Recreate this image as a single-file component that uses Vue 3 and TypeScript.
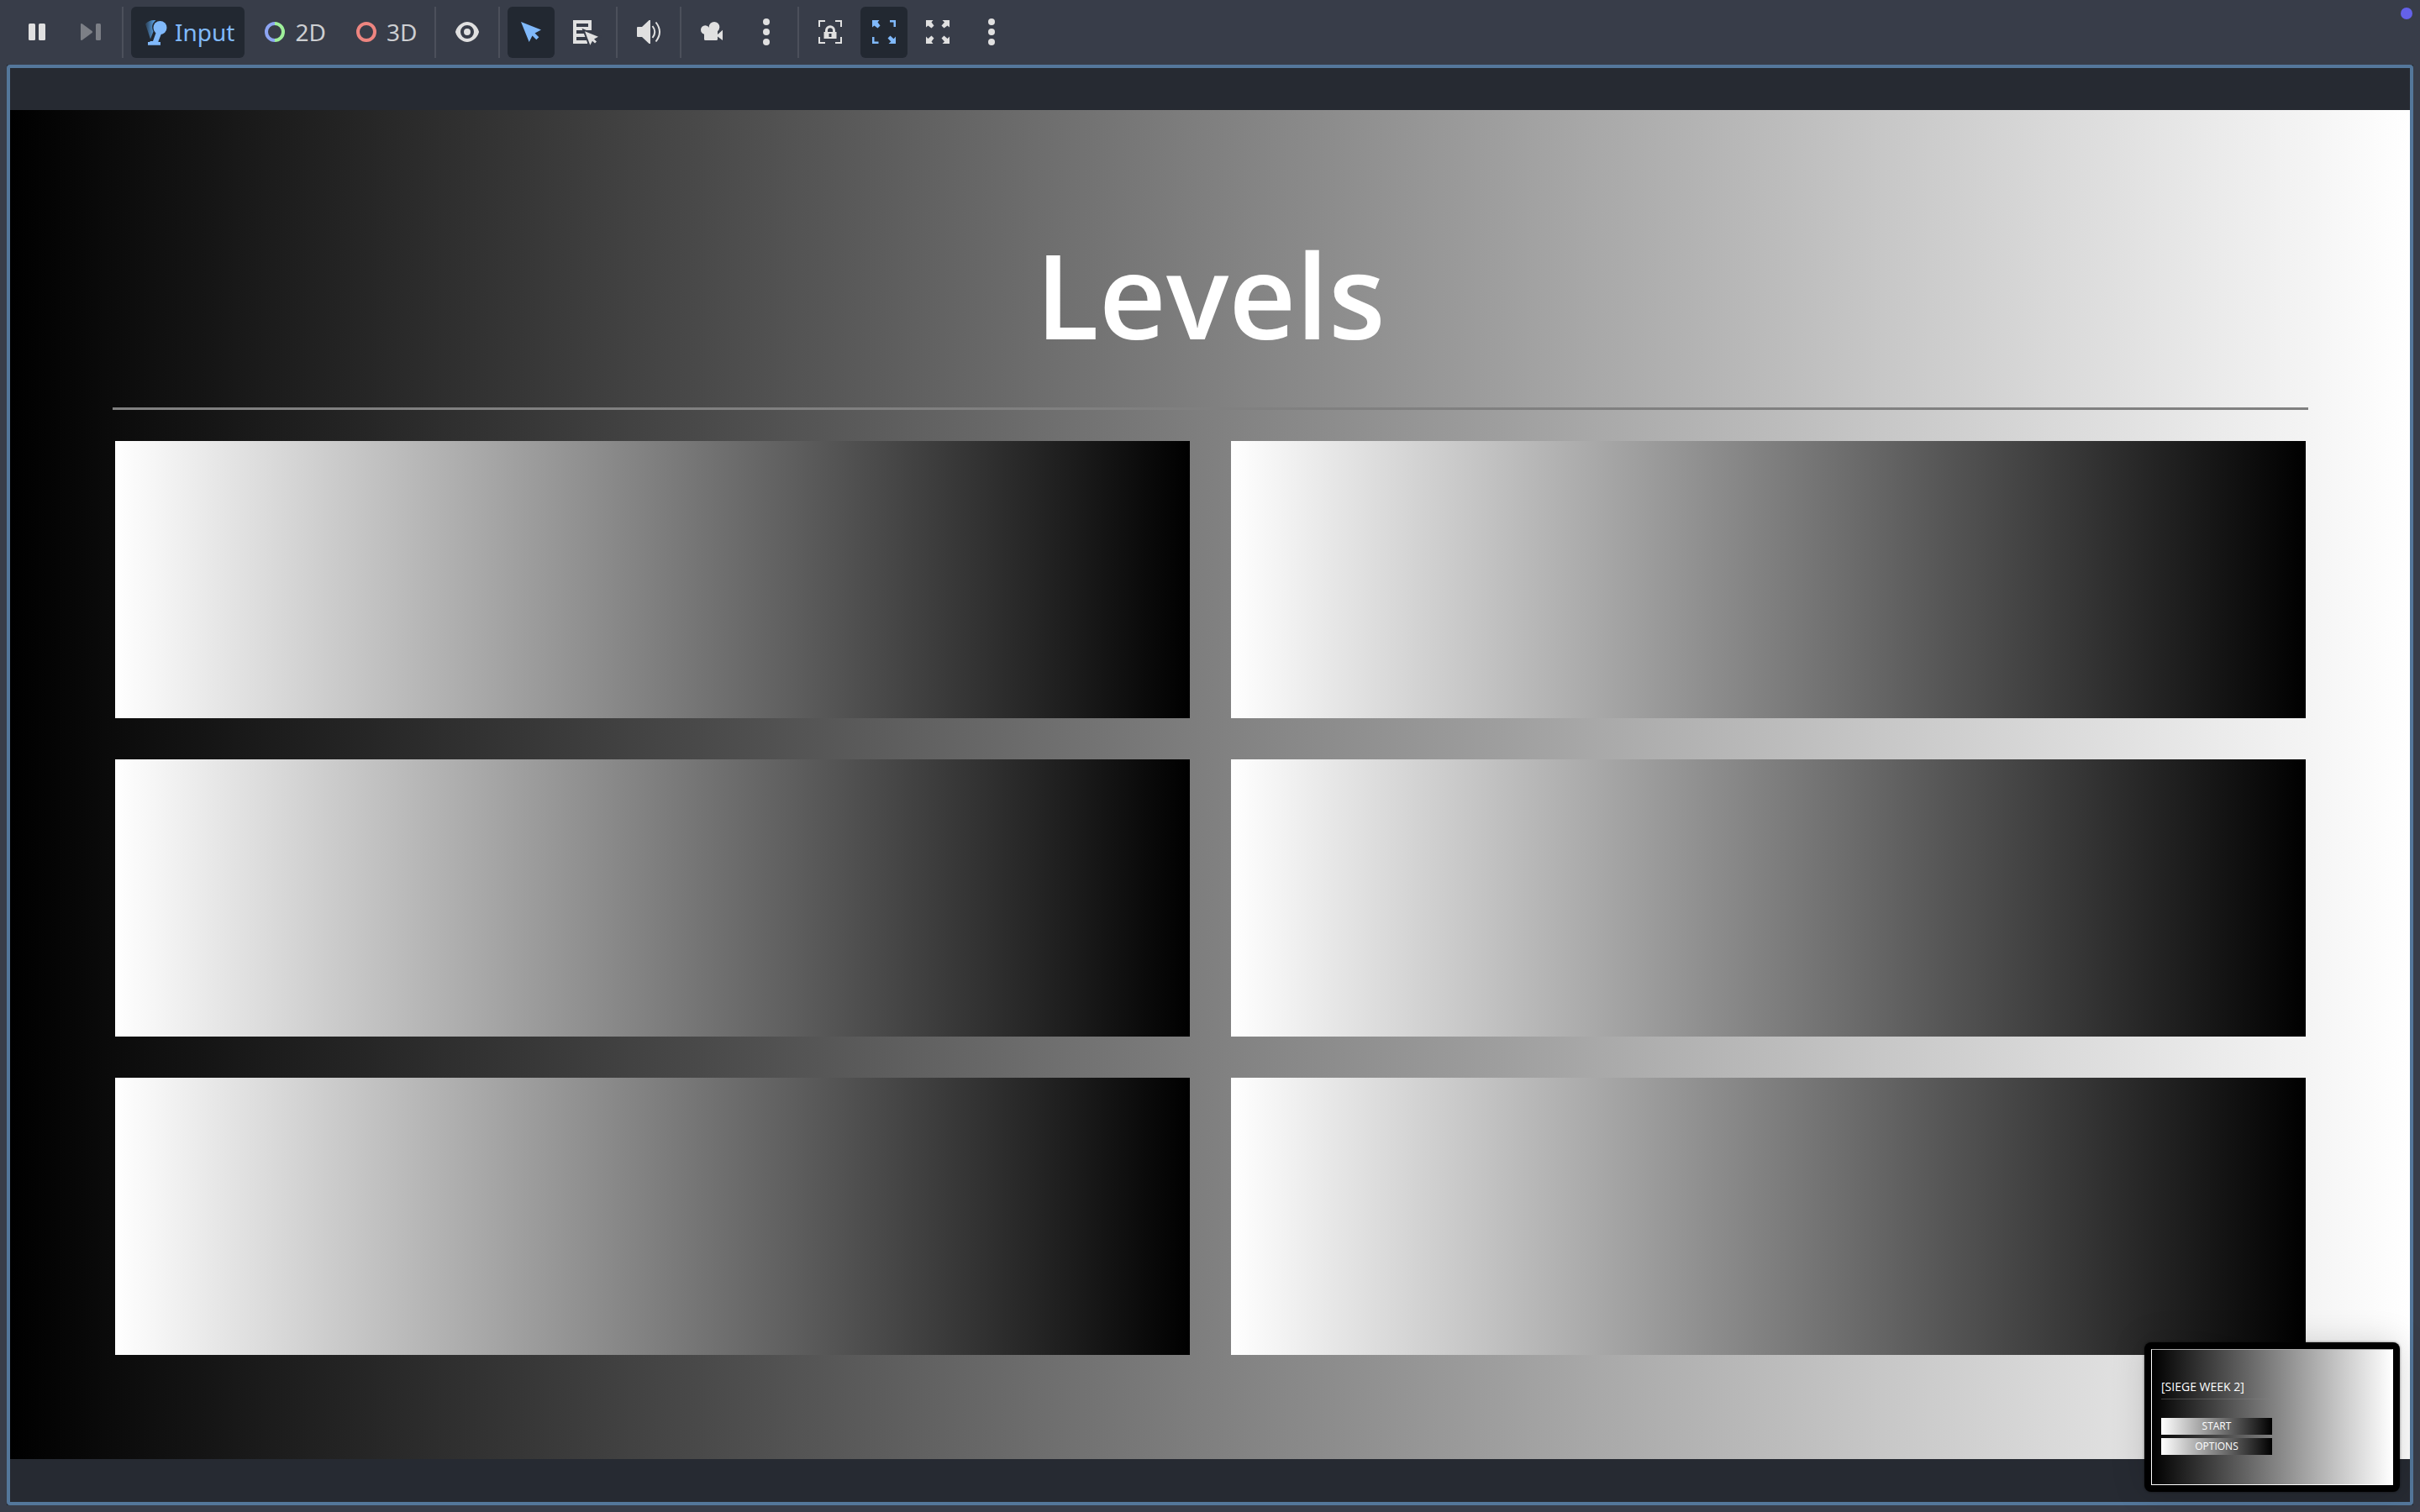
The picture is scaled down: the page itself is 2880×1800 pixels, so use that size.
<script setup lang="ts">
import { ref } from 'vue'

type Mode = 'input' | '2d' | '3d'

const mode = ref<Mode>('input')
const levels = [1, 2, 3, 4, 5, 6]
</script>

<template>
  <div class="editor">
    <header class="toolbar">
      <button class="tool" aria-label="Pause">
        <svg class="icon" viewBox="0 0 32 32">
          <rect x="6" y="6" width="8" height="20" rx="1.5" />
          <rect x="18" y="6" width="8" height="20" rx="1.5" />
        </svg>
      </button>
      <button class="tool" aria-label="Next frame" disabled>
        <svg class="icon" viewBox="0 0 32 32">
          <path d="M4 7.200Q4 5.400 5.800 6.200L17.600 15Q18.600 16 17.600 17L5.800 25.800Q4 26.600 4 24.800Z" />
          <rect x="22" y="6" width="6" height="20" rx="1.5" />
        </svg>
      </button>
      <span class="separator"></span>
      <button class="tool mode" :class="{ active: mode === 'input' }" @click="mode = 'input'">
        <svg class="icon" viewBox="0 0 32 32">
          <defs>
            <linearGradient id="sweep" x1="0" x2="1" y1="0" y2="0">
              <stop offset="0" stop-color="#5fb2ff" stop-opacity="0.15" />
              <stop offset="1" stop-color="#5fb2ff" />
            </linearGradient>
          </defs>
          <path fill="url(#sweep)" d="M5 6.500Q9 2 15 2L17.500 2.300C13 5.500 12 10 14.500 15.500L11 24.500Z" />
          <circle cx="22.500" cy="11" r="8" />
          <path d="M18 16L14 27H10.500V28H8V31.700H23V28H20.500V27L24.500 17Z" />
        </svg>
        Input
      </button>
      <button class="tool mode" :class="{ active: mode === '2d' }" @click="mode = '2d'">
        <svg class="icon ring" viewBox="0 0 32 32">
          <path d="M16 6a10 10 0 0 0 0 20" stroke="#8da5f3" />
          <path d="M16 6a10 10 0 0 1 0 20" stroke="#9ff09a" />
        </svg>
        2D
      </button>
      <button class="tool mode" :class="{ active: mode === '3d' }" @click="mode = '3d'">
        <svg class="icon ring" viewBox="0 0 32 32">
          <circle cx="16" cy="16" r="10" stroke="#ee8580" />
        </svg>
        3D
      </button>
      <span class="separator"></span>
      <button class="tool" aria-label="Toggle visibility">
        <svg class="icon" viewBox="0 0 16 16">
          <path
            d="M8 2C5.443 2 2.209 3.948 1.045 7.705a1 1 0 0 0-.006.57C2.163 12.060 5.500 14 8 14s5.836-1.940 6.961-5.725a1 1 0 0 0 0-.550C13.861 3.935 10.557 2 8 2zm0 2a4 4 0 0 1 4 4 4 4 0 0 1-4 4 4 4 0 0 1-4-4 4 4 0 0 1 4-4zm0 2a2 2 0 0 0-2 2 2 2 0 0 0 2 2 2 2 0 0 0 2-2 2 2 0 0 0-2-2z"
          />
        </svg>
      </button>
      <span class="separator"></span>
      <button class="tool active" aria-label="Select">
        <svg class="icon" viewBox="0 0 32 32">
          <path d="M4 4L28 13.500L20.500 17.500L25.300 22.200L22.300 25.200L17.500 20.500L13.700 28Z" />
        </svg>
      </button>
      <button class="tool" aria-label="Show list of selectable nodes">
        <svg class="icon" viewBox="0 0 32 32">
          <path d="M2 2H24V6H2ZM2 6H6V30H2ZM20 6H24V14H20ZM6 10H24V14H6ZM6 18H18V22H6ZM6 26H19V30H6Z" />
          <path class="cutout" d="M16 15.300L32 21.800L27 24.500L30 27.500L28 29.500L25 26.700L22.300 31.700Z" />
          <path d="M16 15.300L32 21.800L27 24.500L30 27.500L28 29.500L25 26.700L22.300 31.700Z" />
        </svg>
      </button>
      <span class="separator"></span>
      <button class="tool" aria-label="Mute audio">
        <svg class="icon" viewBox="0 0 32 32">
          <path d="M3 10H8L16.500 2H18V30H16.500L8 22H3Q2 22 2 21V11Q2 10 3 10Z" />
          <path class="line" d="M20.500 9Q26 16 20.500 23M24.500 4.500Q33.500 16 24.500 27.500" />
        </svg>
      </button>
      <span class="separator"></span>
      <button class="tool" aria-label="Override game camera">
        <svg class="icon" viewBox="0 0 32 32">
          <circle cx="18" cy="10.300" r="6.300" />
          <circle cx="7.300" cy="13.500" r="5.300" />
          <path d="M6 13H22V24.500Q22 26 20.500 26H7.500Q6 26 6 24.500ZM22 19L28 13.700V26L22 21.500Z" />
        </svg>
      </button>
      <button class="tool" aria-label="Camera options">
        <svg class="icon" viewBox="0 0 32 32">
          <circle cx="16" cy="4" r="4" />
          <circle cx="16" cy="16" r="4" />
          <circle cx="16" cy="28" r="4" />
        </svg>
      </button>
      <span class="separator"></span>
      <button class="tool" aria-label="Fixed size">
        <svg class="icon" viewBox="0 0 32 32">
          <path class="line" d="M3 10V3H10M22 3H29V10M29 22V29H22M10 29H3V22" />
          <path fill-rule="evenodd" d="M8.500 16H10V14.200A6 6 0 0 1 22 14.200V16H23.500V24H8.500ZM13 16H19V14.200A3 3 0 0 0 13 14.200ZM14.500 18V22H17.500V18Z" />
        </svg>
      </button>
      <button class="tool active" aria-label="Keep aspect ratio">
        <svg class="icon" viewBox="0 0 32 32">
          <path d="M2 2H10.500L8.500 4.500L11.500 8.500L8.500 11.500L4.500 8.500L2 10.500Z" />
          <path d="M30 30H21.500L24.300 27.500L20.500 23.500L23.500 20.500L27.500 24.300L30 21.500Z" />
          <path d="M23 2H30V10H27.500V4.500H23ZM2 22H4.500V27.500H9.500V30H2Z" />
        </svg>
      </button>
      <button class="tool" aria-label="Stretch to fit">
        <svg class="icon" viewBox="0 0 32 32">
          <path d="M2 2H10.500L8.500 4.500L11.500 8.500L8.500 11.500L4.500 8.500L2 10.500Z" />
          <path d="M30 30H21.500L24 27.500L20.500 23.500L23.500 20.500L27.500 24L30 21.500Z" />
          <path d="M30 2V10.500L27.500 8.500L23.500 11.500L20.500 8.500L24 4.500L21.500 2Z" />
          <path d="M2 30V21.500L4.500 24L8.500 20.500L11.500 23.500L8.500 27.500L10.500 30Z" />
        </svg>
      </button>
      <button class="tool" aria-label="Window options">
        <svg class="icon" viewBox="0 0 32 32">
          <circle cx="16" cy="4" r="4" />
          <circle cx="16" cy="16" r="4" />
          <circle cx="16" cy="28" r="4" />
        </svg>
      </button>
      <i class="status-dot"></i>
    </header>

    <main class="viewport">
      <div class="frame">
        <section class="game">
          <h1 class="title">Levels</h1>
          <hr class="rule" />
          <div class="levels">
            <button v-for="level in levels" :key="level" class="level" :aria-label="`Level ${level}`"></button>
          </div>
        </section>
        <aside class="preview">
          <div class="menu">
            <h2 class="menu-title">[SIEGE WEEK 2]</h2>
            <hr class="menu-rule" />
            <button class="menu-button">START</button>
            <button class="menu-button">OPTIONS</button>
          </div>
        </aside>
      </div>
    </main>
  </div>
</template>

<style>
body {
  margin: 0;
}
</style>

<style scoped>
.editor {
  display: flex;
  flex-direction: column;
  box-sizing: border-box;
  min-height: 100vh;
  padding: 8px;
  background: #383d49;
  font-family: 'Noto Sans', sans-serif;
}

button {
  margin: 0;
  padding: 0;
  border: 0;
  font: inherit;
}

.toolbar {
  position: relative;
  display: flex;
  align-items: center;
  gap: 8px;
  height: 61px;
  padding: 0 8px 8px;
}

.tool {
  display: flex;
  align-items: center;
  justify-content: center;
  box-sizing: border-box;
  width: 56px;
  height: 61px;
  padding-bottom: 1px;
  border-radius: 6px;
  background: transparent;
  color: #e0e0e0;
}

.tool.mode {
  gap: 8px;
  width: auto;
  padding: 0 12px 1px;
  color: #cdcfd2;
  font-size: 28px;
  line-height: 40px;
}

.tool:disabled {
  color: #7c7f86;
}

.tool.active {
  background: #222831;
  color: #80b9fb;
}

.icon {
  display: block;
  flex: none;
  width: 32px;
  height: 32px;
  fill: currentColor;
  overflow: visible;
}

.ring {
  fill: none;
  stroke-width: 4;
}

.line {
  fill: none;
  stroke: currentColor;
  stroke-width: 2;
}

.cutout {
  fill: #383d49;
  stroke: #383d49;
  stroke-width: 4;
}

.separator {
  width: 2px;
  height: 61px;
  margin: 0 1px;
  background: #4c505b;
}

.status-dot {
  position: absolute;
  top: 1px;
  right: 1px;
  width: 14px;
  height: 14px;
  border-radius: 50%;
  background: #6461e9;
}

.viewport {
  display: flex;
  flex: 1;
  background: #22262e;
}

.frame {
  position: relative;
  display: flex;
  flex: 1;
  align-items: center;
  border: 4px solid #54779b;
  border-radius: 4px;
  background: #262a32;
}

.game {
  display: flex;
  flex-direction: column;
  box-sizing: border-box;
  width: 100%;
  aspect-ratio: 16 / 9;
  margin-bottom: 1px;
  padding: 124px 121px 124px 122px;
  background: linear-gradient(90deg, #000, #fff);
  font-family: 'Open Sans', sans-serif;
}

.title {
  margin: 0;
  color: #fff;
  font-size: 139px;
  font-weight: 600;
  line-height: 190px;
  text-align: center;
}

.rule {
  width: 100%;
  height: 3px;
  margin: 40px 0 37px;
  border: 0;
  background: #808080;
}

.levels {
  display: grid;
  flex: 1;
  grid-template-columns: 1fr 1fr;
  grid-auto-rows: 1fr;
  gap: 49px;
  padding: 0 3px;
}

.level {
  background: linear-gradient(90deg, #fff, #000);
}

.preview {
  position: absolute;
  right: 12px;
  bottom: 12px;
  padding: 8px;
  border-radius: 8px;
  background: #000;
  box-shadow: 0 0 40px rgba(0, 0, 0, 0.16), 0 0 3px rgba(0, 0, 0, 0.5);
}

.menu {
  display: flex;
  flex-direction: column;
  align-items: flex-start;
  gap: 4px;
  box-sizing: border-box;
  width: 288px;
  height: 162px;
  padding: 34px 11px 0;
  border: 1px solid #fff;
  border-top-color: #aaa;
  background: linear-gradient(90deg, #000, #fff);
  color: #fff;
  font-family: 'Open Sans', sans-serif;
}

.menu-title {
  margin: 0;
  font-size: 14px;
  font-weight: 500;
  line-height: 20px;
}

.menu-rule {
  width: 132px;
  height: 1px;
  margin: 0 0 18px;
  border: 0;
  background: linear-gradient(90deg, #3c3c3c, #808080);
}

.menu-button {
  width: 132px;
  height: 20px;
  background: linear-gradient(90deg, #fff, #000);
  color: #fff;
  font-size: 12px;
  font-weight: 500;
  line-height: 20px;
}
</style>
